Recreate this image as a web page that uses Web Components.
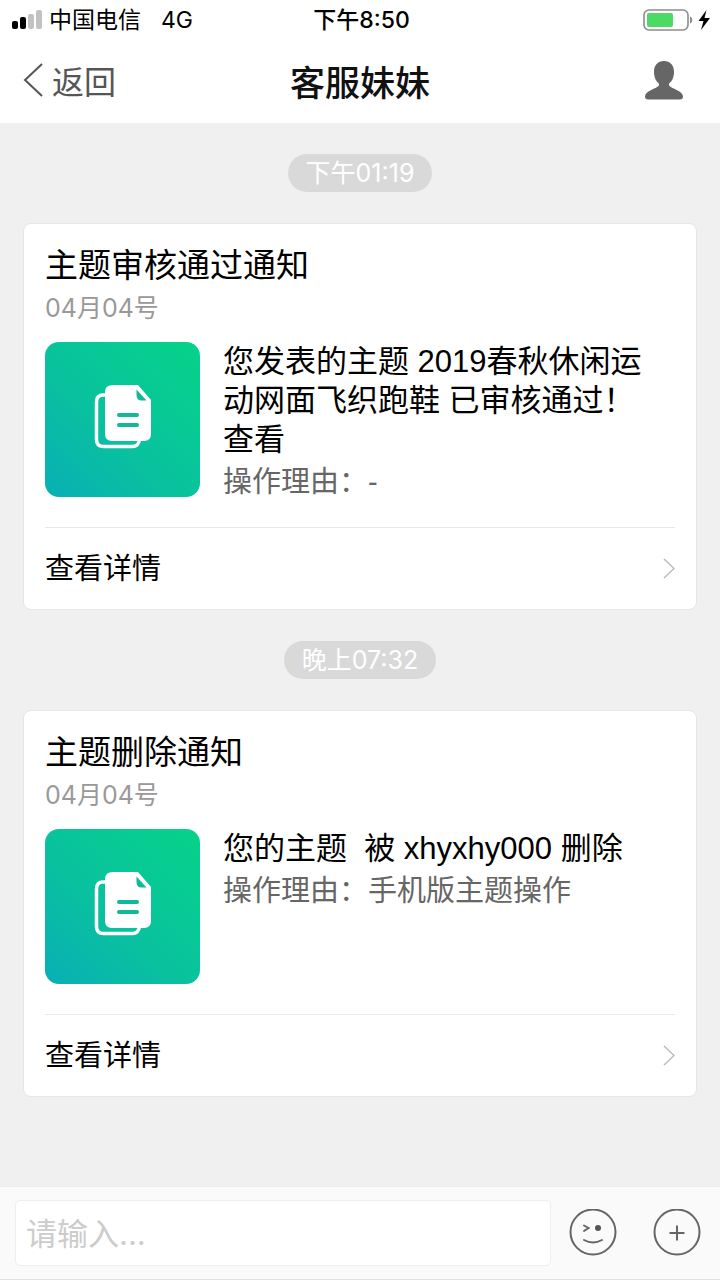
<!DOCTYPE html>
<html lang="zh-CN">
<head>
    <meta charset="UTF-8">
    <meta name="viewport" content="width=device-width, initial-scale=1.0">
    <title>客服妹妹</title>
    <style>
        body {
            margin: 0;
            background-color: #f0f0f0;
            color: #000;
            font-family: Inter, "Noto Sans CJK SC", sans-serif;
        }
    </style>
</head>
<body>
    <chat-page>
        <status-bar slot="top" carrier="中国电信" network="4G" time="下午8:50"></status-bar>
        <nav-bar slot="top" back="返回">客服妹妹</nav-bar>

        <time-label>下午01:19</time-label>
        <notice-card date="04月04号" reason="操作理由：-">
            <span slot="title">主题审核通过通知</span>
            您发表的主题 2019春秋休闲运动网面飞织跑鞋 已审核通过！查看
        </notice-card>

        <time-label>晚上07:32</time-label>
        <notice-card date="04月04号" reason="操作理由：手机版主题操作">
            <span slot="title">主题删除通知</span>
            您的主题&nbsp; 被 xhyxhy000 删除
        </notice-card>

        <message-bar slot="bottom" placeholder="请输入..."></message-bar>
    </chat-page>

    <script>
        class ChatPage extends HTMLElement {

            constructor() {
                super();
                this.shadowDOM = this.attachShadow({ mode: "open" });
                this.shadowDOM.innerHTML = `
                <style>
                    :host {
                        display: flex;
                        flex-direction: column;
                        min-height: 100vh;
                    }

                    header {
                        background-color: #fff;
                    }

                    main {
                        flex: 1;
                        display: flex;
                        flex-direction: column;
                        gap: 31px;
                        padding: 31px 23px;
                    }
                </style>
                <header><slot name="top"></slot></header>
                <main><slot></slot></main>
                <slot name="bottom"></slot>`;
            }
        }

        class StatusBar extends HTMLElement {

            constructor() {
                super();
                this.shadowDOM = this.attachShadow({ mode: "open" });
            }

            connectedCallback() {
                this.render();
            }

            render() {
                this.shadowDOM.innerHTML = `
                <style>
                    :host {
                        display: grid;
                        grid-template-columns: 1fr auto 1fr;
                        align-items: center;
                        height: 40px;
                        padding: 0 8px 0 11px;
                        font-size: 23px;
                        line-height: 40px;
                    }

                    div {
                        display: flex;
                        align-items: center;
                    }

                    .network {
                        margin-left: 20px;
                    }

                    .signal {
                        margin-right: 6px;
                    }

                    .time {
                        font-weight: 500;
                    }

                    .power {
                        justify-content: flex-end;
                    }

                    svg {
                        display: block;
                    }
                </style>
                <div>
                    <svg class="signal" width="32" height="20" viewBox="0 0 32 20">
                        <rect x="1" y="11" width="6" height="8" rx="2"/>
                        <rect x="9" y="7" width="6" height="12" rx="2"/>
                        <rect x="17" y="4" width="6" height="15" rx="2" fill="#c2c2c2"/>
                        <rect x="25" y="0" width="6" height="19" rx="2" fill="#c2c2c2"/>
                    </svg>
                    <span>${this.getAttribute("carrier")}</span>
                    <span class="network">${this.getAttribute("network")}</span>
                </div>
                <span class="time">${this.getAttribute("time")}</span>
                <div class="power">
                    <svg width="69" height="24" viewBox="0 0 69 24">
                        <rect x="1" y="2" width="44" height="20" rx="5" fill="none" stroke="#8c8c8c" stroke-width="1.6"/>
                        <rect x="4" y="5" width="26" height="14" rx="2" fill="#4cd964"/>
                        <path d="M47 8.500c3 .6 3 6.400 0 7z" fill="#8c8c8c"/>
                        <path d="M63.500 2L55.500 13h5L58 22l9-12h-5.500z"/>
                    </svg>
                </div>`;
            }
        }

        class NavBar extends HTMLElement {

            constructor() {
                super();
                this.shadowDOM = this.attachShadow({ mode: "open" });
            }

            connectedCallback() {
                this.render();
            }

            render() {
                this.shadowDOM.innerHTML = `
                <style>
                    :host {
                        display: grid;
                        grid-template-columns: 1fr auto 1fr;
                        align-items: center;
                        height: 80px;
                        padding: 0 36px 3px 23px;
                    }

                    a {
                        display: flex;
                        align-items: center;
                        gap: 8px;
                        color: #555;
                        font-size: 32px;
                        text-decoration: none;
                    }

                    h1 {
                        margin: 0;
                        padding-left: 13px;
                        color: #111;
                        font-size: 35px;
                        font-weight: 500;
                    }

                    button {
                        justify-self: end;
                        padding: 0;
                        border: 0;
                        background: none;
                    }

                    svg {
                        display: block;
                    }
                </style>
                <a href="#">
                    <svg width="21" height="36" viewBox="0 0 21 36" fill="none" stroke="#555" stroke-width="2">
                        <path d="M19 2L2 18l17 16"/>
                    </svg>
                    ${this.getAttribute("back")}
                </a>
                <h1><slot></slot></h1>
                <button type="button" aria-label="用户">
                    <svg width="40" height="40" viewBox="0 0 40 40" fill="#666">
                        <path d="M20 1c6.200 0 10 4.500 10 10.500 0 5-1.500 9.500-5 12v2c2 3 14 5 14 11 0 2-1 3-3 3H4c-2 0-3-1-3-3 0-6 12-8 14-11v-2c-3.500-2.500-5-7-5-12C10 5.500 13.800 1 20 1z"/>
                    </svg>
                </button>`;
            }
        }

        class TimeLabel extends HTMLElement {

            constructor() {
                super();
                this.shadowDOM = this.attachShadow({ mode: "open" });
                this.shadowDOM.innerHTML = `
                <style>
                    :host {
                        display: block;
                        align-self: center;
                        padding: 0 18px;
                        border-radius: 19px;
                        background-color: #d9d9d9;
                        color: #fff;
                        font-size: 25px;
                        line-height: 38px;
                    }
                </style>
                <slot></slot>`;
            }
        }

        class NoticeCard extends HTMLElement {

            constructor() {
                super();
                this.shadowDOM = this.attachShadow({ mode: "open" });
            }

            connectedCallback() {
                this.render();
            }

            render() {
                this.shadowDOM.innerHTML = `
                <style>
                    :host {
                        display: block;
                        padding: 19px 21px 0;
                        border: 1px solid #e6e6e6;
                        border-radius: 8px;
                        background-color: #fff;
                    }

                    h2 {
                        margin: 0;
                        font-size: 33px;
                        font-weight: 400;
                        line-height: 44px;
                    }

                    time {
                        display: block;
                        color: #999;
                        font-size: 25px;
                        line-height: 42px;
                    }

                    .content {
                        display: flex;
                        gap: 23px;
                        min-height: 160px;
                        padding: 13px 0 25px;
                    }

                    .thumb {
                        flex: none;
                        width: 155px;
                        height: 155px;
                        border-radius: 14px;
                        background: linear-gradient(45deg, #09afb5, #09c0a0 40%, #06d388);
                    }

                    .text {
                        padding-right: 22px;
                        font-family: "Liberation Sans", "Noto Sans CJK SC", sans-serif;
                    }

                    p {
                        margin: 0 0 3px;
                        font-size: 31px;
                        line-height: 39px;
                    }

                    .reason {
                        margin: 0;
                        color: #666;
                        font-size: 29px;
                        line-height: 40px;
                    }

                    a {
                        display: flex;
                        align-items: center;
                        justify-content: space-between;
                        border-top: 1px solid #e8e8e8;
                        color: #000;
                        font-size: 29px;
                        line-height: 81px;
                        text-decoration: none;
                    }
                </style>
                <h2><slot name="title"></slot></h2>
                <time>${this.getAttribute("date")}</time>
                <div class="content">
                    <svg class="thumb" viewBox="0 0 155 155">
                        <path d="M61 53h-3q-6.500 0-6.500 7v37.500q0 7 7 7h29q6 0 7-7" fill="none" stroke="#fff" stroke-width="3.500"/>
                        <path d="M68 43h25l13 15v34q0 7-7 7H67q-7 0-7-7V50q0-7 8-7z" fill="#fff"/>
                        <path d="M91.500 47.500v5.500q0 5.500 5 5.500h5z" fill="#12b998"/>
                        <path d="M74 73h18M74 83h18" fill="none" stroke="#12b998" stroke-width="4" stroke-linecap="round"/>
                    </svg>
                    <div class="text">
                        <p><slot></slot></p>
                        <p class="reason">${this.getAttribute("reason")}</p>
                    </div>
                </div>
                <a href="#">
                    查看详情
                    <svg width="12" height="21" viewBox="0 0 12 21" fill="none" stroke="#bbb" stroke-width="1.500">
                        <path d="M1 1l10 9.500L1 20"/>
                    </svg>
                </a>`;
            }
        }

        class MessageBar extends HTMLElement {

            constructor() {
                super();
                this.shadowDOM = this.attachShadow({ mode: "open" });
            }

            connectedCallback() {
                this.render();
            }

            render() {
                this.shadowDOM.innerHTML = `
                <style>
                    :host {
                        display: flex;
                        align-items: center;
                        padding: 13px 19px 13px 15px;
                        border-top: 1px solid #ececec;
                        border-bottom: 1px solid #e2e2e2;
                        background-color: #fafafa;
                    }

                    input {
                        flex: 1;
                        min-width: 0;
                        height: 66px;
                        box-sizing: border-box;
                        padding: 0 10px;
                        border: 1px solid #eee;
                        border-radius: 5px;
                        background-color: #fff;
                        font-family: inherit;
                        font-size: 31px;
                    }

                    input::placeholder {
                        color: #ccc;
                    }

                    button {
                        margin-left: 36px;
                        padding: 0;
                        border: 0;
                        background: none;
                    }

                    .face {
                        margin-left: 18px;
                    }

                    svg {
                        display: block;
                        fill: none;
                        stroke: #666;
                        stroke-width: 2;
                    }
                </style>
                <input type="text" aria-label="消息" placeholder="${this.getAttribute("placeholder")}">
                <button class="face" type="button" aria-label="表情">
                    <svg width="48" height="48" viewBox="0 0 48 48">
                        <circle cx="24" cy="23" r="22.500"/>
                        <path d="M15 16.500l4.500 2.500-4.500 3M15 31q9 5 18 0" stroke-linecap="round"/>
                        <circle cx="29" cy="19" r="3" fill="#555" stroke="none"/>
                    </svg>
                </button>
                <button type="button" aria-label="更多">
                    <svg width="48" height="48" viewBox="0 0 48 48">
                        <circle cx="24" cy="23" r="22.500"/>
                        <path d="M16.500 24h15M24 16.500v15"/>
                    </svg>
                </button>`;
            }
        }

        customElements.define('chat-page', ChatPage);
        customElements.define('status-bar', StatusBar);
        customElements.define('nav-bar', NavBar);
        customElements.define('time-label', TimeLabel);
        customElements.define('notice-card', NoticeCard);
        customElements.define('message-bar', MessageBar);
    </script>
</body>
</html>
